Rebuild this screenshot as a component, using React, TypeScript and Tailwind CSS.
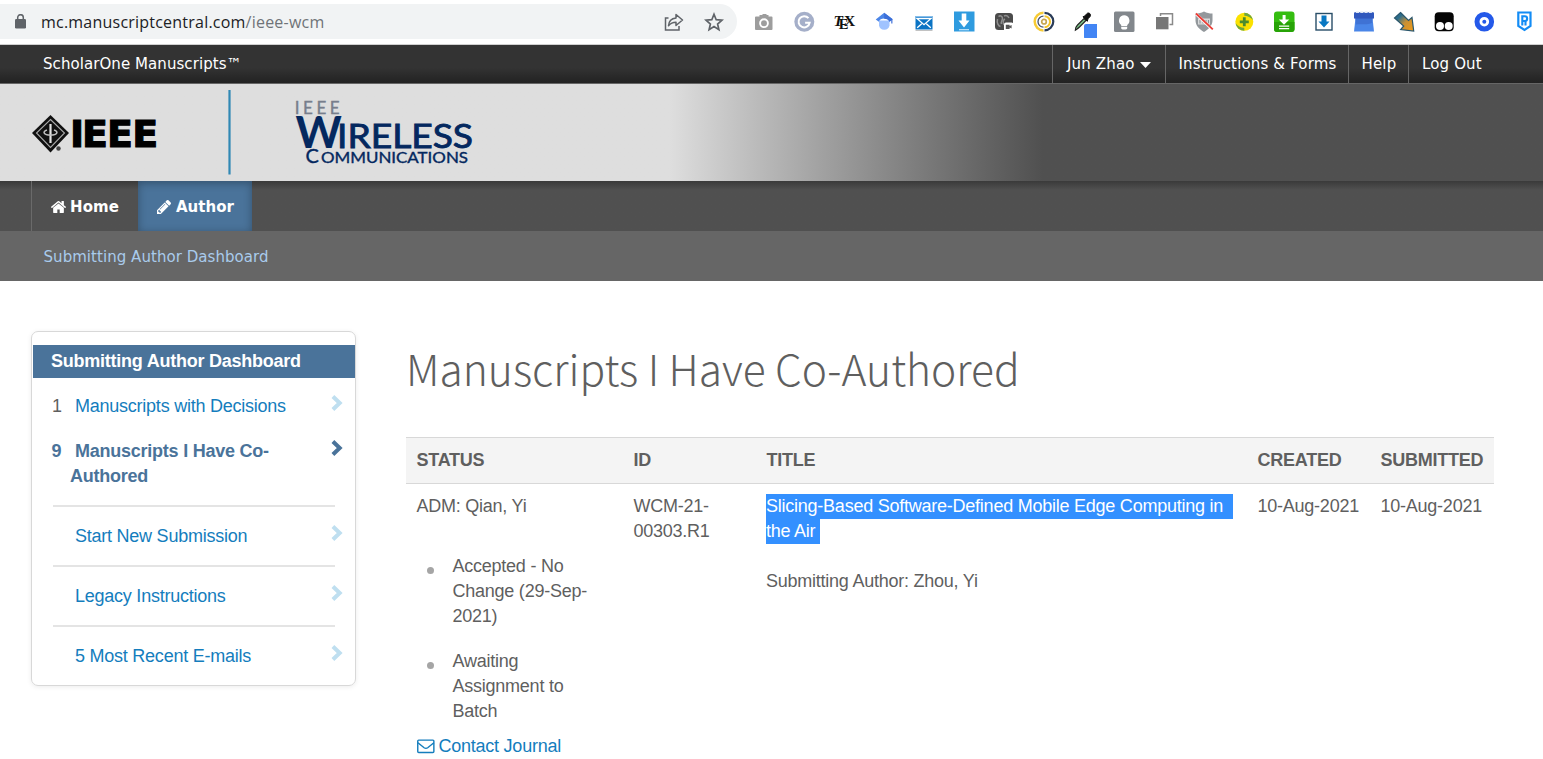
import React from "react";

const cell = "flex w-10 justify-center shrink-0";

function Ico({ children }: { children: React.ReactNode }) {
  return (
    <div className={cell}>
      <svg width="26" height="28" viewBox="-3 -2 26 28" className="block">
        {children}
      </svg>
    </div>
  );
}

function Extensions() {
  return (
    <div className="flex pt-[10px]">
      <Ico>
        <path d="M2 4.500h3.500V3h3v-1h4v1h2v1.500h3a1 1 0 0 1 1 1V17a1 1 0 0 1-1 1H2a1 1 0 0 1-1-1V5.500a1 1 0 0 1 1-1z" fill="#9d9d9d" />
        <circle cx="10" cy="11.200" r="3.900" fill="none" stroke="#fff" strokeWidth="1.900" />
      </Ico>
      <Ico>
        <circle cx="10.300" cy="9.700" r="10" fill="#a5afc9" />
        <path d="M14.500 6.200A5.600 5.600 0 1 0 15.700 10.700H11.100" fill="none" stroke="#fff" strokeWidth="2" />
      </Ico>
      <Ico>
        <text x="0" y="13.500" fontSize="16" fontFamily="Liberation Serif, serif" fontWeight="700" fill="#111">
          <tspan x="-.5" fontStyle="italic" fontSize="15.500">T</tspan>
          <tspan x="4.700" dy="3.500" fontSize="14.500">E</tspan>
          <tspan x="10" dy="-3.500" fontSize="15.500">X</tspan>
        </text>
      </Ico>
      <Ico>
        <path d="M5 8.500v5a5.300 4.800 0 0 0 10.500 0v-5z" fill="#a0c3ff" />
        <path d="M10.200 .8L18.700 7.300 15.500 9.800a5.500 4.500 0 0 0-10.600 0L1.700 7.600z" fill="#4c86e8" />
        <path d="M10.200 .8L18.700 7.300 15.500 9.800a6 4.500 0 0 0-5.300-3z" fill="#3c6fd8" />
        <path d="M17.300 7.500h1.100v4h-1.100z" fill="#3367d6" />
      </Ico>
      <Ico>
        <path d="M1.500 4h17v13.500h-17z" fill="#0b74c4" />
        <path d="M1.500 4h17v1.500h-17z" fill="#86bdea" />
        <path d="M3.200 6.700h13.600L10 12.700zM3.200 15.700l4.500-4M16.800 15.700l-4.500-4" fill="#0b74c4" stroke="#fff" strokeWidth="1.300" />
        <path d="M1.500 18.500h17" stroke="#c2c2c2" />
      </Ico>
      <Ico>
        <path d="M0 -.5h20.500v20H0z" fill="#2f9bdf" />
        <path d="M7.700 1.500h4.600v7h3.200L10 15.500 4.500 8.500h3.200z" fill="#fff" />
        <path d="M5 17.700h10" stroke="#c5e6fa" strokeWidth="1.200" />
      </Ico>
      <Ico>
        <rect x="1" y="1" width="18" height="17" rx="3.500" fill="#4b4b4b" />
        <path d="M4.500 4.500c2-1.500 4 0 4 2s-2 3.500-1 5.500M10 4c2-1 4 0 5 2M3.500 7c-1 4 1 7 3 7.500M11 7c-2 1-2 4-1 6" stroke="#909090" strokeWidth="1.500" fill="none" />
        <rect x="10" y="10.500" width="9.500" height="9" rx="2" fill="#fff" />
        <path d="M11.800 12.700h3.800v1.300l2-1v3.600l-2-1v1.500h-3.800z" fill="#555" />
      </Ico>
      <Ico>
        <path d="M10.500 .8a8.800 8.800 0 0 1 0 17.600" stroke="#2b3c58" strokeWidth="2.200" fill="none" />
        <path d="M9.500 .8a8.800 8.800 0 0 0 0 17.600" stroke="#f7cb35" strokeWidth="2.500" fill="none" />
        <path d="M9.500 4.200a5.500 5.500 0 0 0 0 11" stroke="#44516a" strokeWidth="1.300" fill="none" />
        <path d="M10.500 4.200a5.500 5.500 0 0 1 0 11" stroke="#f5c52a" strokeWidth="2" fill="none" />
        <circle cx="10" cy="9.700" r="2.300" fill="none" stroke="#c7a650" strokeWidth="1.700" />
      </Ico>
      <Ico>
        <path d="M1.300 18.200c0-2 1-4 2.200-5.200l6.500-6.500 2 2L5.500 15c-1 1-2.500 2-4.200 3.200z" fill="#7bbf86" stroke="#222" strokeWidth="1.100" />
        <path d="M9 4.800l1.800-.8 2-2.300c2-2 4.800.6 3.300 2.800L14 6.800l-.7 2.500z" fill="#111" stroke="#111" />
        <rect x="10" y="12" width="15" height="14.800" rx="2" fill="#4285f4" />
      </Ico>
      <Ico>
        <rect x="0" y="-.5" width="20.500" height="20.500" rx="1.500" fill="#82878c" />
        <path d="M10.200 3.300a5.300 5.300 0 0 1 3 9.600v1.300H7.200v-1.300a5.300 5.300 0 0 1 3-9.600zM7.200 15h6v1.500a2 2 0 0 1-2 1h-2a2 2 0 0 1-2-1z" fill="#fff" />
      </Ico>
      <Ico>
        <path d="M6.500 4V1.700h12v10.800h-3" fill="none" stroke="#8a8a8a" strokeWidth="1.500" />
        <path d="M2 5h12.500v12.300H2z" fill="#777" />
      </Ico>
      <Ico>
        <path d="M10-.5c3 1.500 5 2 8.500 2v7c0 5-4 9-8.500 11.500C5.500 17.500 1.500 13.500 1.500 8.500v-7c3.500 0 5.500-.5 8.500-2z" fill="#93989c" />
        <path d="M4 6.500h12v6H4z" fill="#d8dadb" />
        <path d="M6 8v3.500M9 8v3.500M12 8v3.500M14.500 8v3.500" stroke="#8b8f92" />
        <path d="M2 2l16.500 15.500" stroke="#fff" strokeWidth="3" />
        <path d="M2 1.500l16.800 15.800" stroke="#ea3b34" strokeWidth="1.800" />
      </Ico>
      <Ico>
        <circle cx="10.300" cy="9.800" r="9" fill="#fbe100" />
        <path d="M10.300 .8a9 9 0 0 1 8.800 7.500c-2.500-3-5.500-4.500-8.800-4.500zM10.300 18.800a9 9 0 0 1-8.800-7.500c2.500 3 5.500 4.500 8.800 4.500z" fill="#6da740" />
        <path d="M10.300 5.300v9M5.800 9.800h9" stroke="#4b8b2e" strokeWidth="2.800" />
      </Ico>
      <Ico>
        <rect x="0" y="-.5" width="20.500" height="20.500" rx="3" fill="#35bd10" />
        <path d="M0 10h20.500v7a3 3 0 0 1-3 3H3a3 3 0 0 1-3-3z" fill="#27a307" />
        <path d="M8.600 3h3v4.500h3.700L10 12.700 4.800 7.500h3.800zM5 13.500h10.200v1.300H5zM5 16h10.200v1.300H5z" fill="#fff" />
      </Ico>
      <Ico>
        <rect x="2" y="1.500" width="16" height="16.500" fill="#fff" stroke="#294e68" strokeWidth="1.400" />
        <path d="M7.500 3.500h5v6h3L10 15.500 4.500 9.500h3z" fill="#0877c2" />
      </Ico>
      <Ico>
        <path d="M1.500 6h17l1.500 13.500H0z" fill="#4a86e8" />
        <path d="M1.500 7h17l-.5 4c-4 2-12 1-16 1.500z" fill="#3f72d4" />
        <rect x="0" y=".3" width="20" height="6.500" rx="1" fill="#3058bd" />
        <path d="M2 .300h16" stroke="#dde5f2" strokeWidth="1.500" strokeDasharray="3 1.300" />
      </Ico>
      <Ico>
        <defs>
          <linearGradient id="arrow" x1="0" y1="0" x2="1" y2="1">
            <stop offset=".25" stopColor="#2c6d8c" />
            <stop offset=".55" stopColor="#c79035" />
            <stop offset="1" stopColor="#f29a16" />
          </linearGradient>
        </defs>
        <path d="M6.500 .5l8 8 3.500-3 1.700 13.500-13-1.500 3-3.500L.5 6z" fill="url(#arrow)" stroke="#28556c" strokeWidth="1.200" />
      </Ico>
      <Ico>
        <rect x=".7" y=".3" width="19" height="19" rx="4" fill="#050505" />
        <circle cx="6" cy="14" r="4" fill="#fff" />
        <circle cx="14.700" cy="14" r="4" fill="#fff" />
      </Ico>
      <Ico>
        <circle cx="10.300" cy="9.700" r="7.300" fill="#fff" stroke="#2459e9" strokeWidth="5" />
        <circle cx="10.300" cy="9.700" r="2" fill="#2459e9" />
      </Ico>
      <Ico>
        <path d="M4.300 .5h12.200v13.500l-6 4-6.200-4z" fill="#fff" stroke="#138cf5" strokeWidth="2.200" />
        <path d="M8.300 13.500V4.300h2.500a2.300 2.300 0 0 1 0 4.700h-2M11.500 9v4.500" fill="none" stroke="#138cf5" strokeWidth="2.100" />
      </Ico>
    </div>
  );
}

function Toolbar() {
  return (
    <div className="flex h-[45px] border-b border-[#d0d0d0] bg-white">
      <div className="mt-1 -ml-4 flex h-[35px] w-[753px] shrink-0 items-center rounded-full bg-[#f1f3f4] pl-[31px]">
        <svg width="12" height="16" viewBox="0 0 12 16" className="mt-px shrink-0">
          <rect x="0" y="5" width="11" height="9.500" rx="1.300" fill="#5f6368" />
          <path d="M2.700 6V3.500a2.800 2.800 0 0 1 5.600 0V6" fill="none" stroke="#5f6368" strokeWidth="1.500" />
        </svg>
        <div className="mt-px ml-[14px] w-[624px] whitespace-nowrap font-['Open_Sans',sans-serif] text-[16px] tracking-[0.22px] text-[#202124]">
          mc.manuscriptcentral.com<span className="text-[#6f7378]">/ieee-wcm</span>
        </div>
        <svg width="20" height="20" viewBox="0 0 20 20" className="-ml-px shrink-0" fill="none" stroke="#5f6368" strokeWidth="1.500">
          <path d="M4.500 6H1.500v12H15v-4" />
          <path d="M12 2.500l6.500 5.500-6.500 5.500v-3.300c-3.500 0-5.500 1-7.500 3.500.3-4 2.800-7.200 7.500-7.700z" strokeLinejoin="round" />
        </svg>
        <svg width="20" height="20" viewBox="0 0 20 20" className="ml-5 shrink-0" fill="none" stroke="#5f6368" strokeWidth="1.700">
          <path d="M10 2.300l2.200 5.400 5.800.5-4.400 3.800 1.300 5.600-4.900-3-4.900 3 1.300-5.600L2 8.200l5.800-.5z" />
        </svg>
      </div>
      <div className="ml-[7px]">
        <Extensions />
      </div>
    </div>
  );
}

function TopBar() {
  const item = "flex h-[38px] items-center border-l border-[#666] whitespace-nowrap";
  return (
    <div className="flex h-[39px] justify-between border-b border-[#666] bg-linear-to-b from-[#333] from-60% to-[#222] font-['DejaVu_Sans',sans-serif] text-[15px] text-white">
      <div className="pt-[7px] pl-[43px] tracking-[0.07px]">ScholarOne Manuscripts™</div>
      <div className="flex tracking-[0.15px]">
        <div className={item + " w-[113px] pl-[14px]"}>
          Jun Zhao
          <svg width="11" height="6" viewBox="0 0 11 6" className="mt-[2px] ml-[5px]">
            <path d="M0 0h11L5.500 6z" fill="#fff" />
          </svg>
        </div>
        <div className={item + " w-[183px] pl-[12.500px]"}>Instructions &amp; Forms</div>
        <div className={item + " w-[60px] pl-[12.500px]"}>Help</div>
        <div className={item + " w-[135px] pl-[13px]"}>Log Out</div>
      </div>
    </div>
  );
}

function Banner() {
  return (
    <div className="flex h-[97px] bg-linear-to-r from-[#dedede] from-[670px] to-[#505050] to-[1043px]">
      <svg width="500" height="97" viewBox="0 84 500 97">
        <path d="M50.500 115L69 133 50.500 152.500 32 133z" fill="#111" />
        <path d="M50.500 119.500L64.500 133 50.500 147.500 36.500 133z" fill="none" stroke="#aaa" strokeWidth="1.100" />
        <path d="M50.500 124v19" stroke="#e4e4e4" strokeWidth="2.200" fill="none" />
        <path d="M47 130c-5 1.500-3.500 5 3.500 5s8.500-3.500 3.500-5" stroke="#c0c0c0" strokeWidth="1.500" fill="none" />
        <circle cx="58.500" cy="148.500" r="2.200" fill="#444" />
        <text x="70 82 107 132.300" y="147" fontFamily="DejaVu Sans, sans-serif" fontWeight="700" fontSize="38" fill="#000" stroke="#000" strokeWidth="1.100">IEEE</text>
        <path d="M229.500 90v84.500" stroke="#3088b4" strokeWidth="2.200" />
        <text x="294.700" y="114" fontFamily="Lato, sans-serif" fontSize="17" textLength="45" fill="#777e8c" stroke="#777e8c" strokeWidth=".4">IEEE</text>
        <g fontFamily="Lato, sans-serif" fill="#04285f" stroke="#04285f">
          <text y="148" fontSize="33.500" strokeWidth=".9">
            <tspan x="295.500" fontSize="44" fontWeight="700" strokeWidth=".1">W</tspan>
            <tspan x="337" textLength="136" lengthAdjust="spacingAndGlyphs">IRELESS</tspan>
          </text>
          <text y="163" fontSize="14.500" strokeWidth=".35">
            <tspan x="305.500" fontSize="20">C</tspan>
            <tspan x="321" textLength="147" lengthAdjust="spacingAndGlyphs">OMMUNICATIONS</tspan>
          </text>
        </g>
      </svg>
    </div>
  );
}

function Nav() {
  return (
    <div className="font-['DejaVu_Sans',sans-serif] text-[15px]">
      <div className="flex h-[50px] bg-[#505050] bg-linear-to-b from-[#3a3a3a] to-[#505050] to-[9px] pl-[31px] font-bold text-white">
        <div className="flex w-[107px] items-center border-l border-[#6a6a6a] pt-[2px] pl-[19px] tracking-[0.1px]">
          <svg width="15" height="12" viewBox="25 256 1613 1280" className="mr-1" fill="#fff">
            <path d="M1408 992v480q0 26-19 45t-45 19h-384v-384h-256v384h-384q-26 0-45-19t-19-45v-480q0-1 .5-3t.5-3l575-474 575 474q1 2 1 6zm223-69l-62 74q-8 9-21 11h-3q-13 0-21-7l-692-577-692 577q-12 8-24 7-13-2-21-11l-62-74q-8-10-7-23.500t11-21.500l719-599q32-26 76-26t76 26l244 204v-195q0-14 9-23t23-9h192q14 0 23 9t9 23v408l219 182q10 8 11 21.500t-7 23.500z" />
          </svg>
          Home
        </div>
        <div className="flex w-[114px] items-center bg-[#4a739a] pt-[2px] pl-[19px] shadow-[inset_0_2px_9px_rgba(0,0,0,0.3)]">
          <svg width="14" height="14" viewBox="0 149 1515 1515" className="mr-[5px]" fill="#fff">
            <path d="M363 1536l91-91l-235-235l-91 91v107h128v128h107zM886 608q0-22-22-22q-10 0-17 7l-542 542q-7 7-7 17q0 22 22 22q10 0 17-7l542-542q7-7 7-17zM832 416l416 416l-832 832h-416v-416zM1515 512q0 53-37 90l-166 166l-416-416l166-165q36-38 90-38q53 0 91 38l235 234q37 39 37 91z" />
          </svg>
          Author
        </div>
      </div>
      <div className="flex h-[50px] items-center bg-[#666] pt-[2px] pl-[43.500px] tracking-[0.05px] text-[#a9cbec]">Submitting Author Dashboard</div>
    </div>
  );
}

function Chevron({ color }: { color: string }) {
  return (
    <svg width="12" height="16" viewBox="0 0 12 16" className="mt-px mr-[12px] ml-auto shrink-0">
      <path d="M1.900 1.500L8.700 8l-6.800 6.500" fill="none" stroke={color} strokeWidth="4" />
    </svg>
  );
}

function SideLink({ label }: { label: string }) {
  return (
    <>
      <div className="mr-5 ml-[21px] h-[2px] bg-[#e4e4e4]" />
      <div className="flex h-[58px] pt-[17px]">
        <span className="pl-[43px] text-[#147dbd]">{label}</span>
        <Chevron color="#bfdff0" />
      </div>
    </>
  );
}

function Sidebar() {
  return (
    <div className="mt-[50px] ml-[31px] h-[355px] w-[325px] shrink-0 rounded-[7px] border border-[#d8d8d8] pt-[13px] shadow-[0_1px_5px_rgba(0,0,0,0.08)]">
      <div className="ml-px flex h-[33px] items-center bg-[#4a739a] pl-[18px] font-bold text-white">Submitting Author Dashboard</div>
      <div className="flex h-[45px] pt-4">
        <span className="w-[43px] pl-5">1</span>
        <span className="text-[#147dbd]">Manuscripts with Decisions</span>
        <Chevron color="#bfdff0" />
      </div>
      <div className="flex h-[82px] pt-4 font-bold text-[#4a739a]">
        <span className="w-[38px] pl-[19.500px]">9</span>
        <span className="w-[215px] indent-[5px]">Manuscripts I Have Co-<br /><span className="inline-block indent-0">Authored</span></span>
        <Chevron color="#4a739a" />
      </div>
      <SideLink label="Start New Submission" />
      <SideLink label="Legacy Instructions" />
      <SideLink label="5 Most Recent E-mails" />
    </div>
  );
}

const cols = "grid grid-cols-[217px_133px_491px_123px_124px]";

function Bullet({ children }: { children: React.ReactNode }) {
  return (
    <li className="mb-5 flex">
      <span className="mt-[13px] mr-[19px] ml-[10px] size-[7px] shrink-0 rounded-full bg-[#a5a5a5]" />
      <span>{children}</span>
    </li>
  );
}

function Content() {
  return (
    <div className="ml-[50px] w-[1088px]">
      <h1 className="mt-[55px] h-[65px] whitespace-nowrap font-['Noto_Sans_CJK_SC',sans-serif] text-[42.500px] leading-[64px] font-light tracking-normal">
        Manuscripts I Have Co-Authored
      </h1>
      <div className={cols + " mt-9 h-[47px] items-center border-y border-[#d8d8d8] bg-[#f4f4f4] font-bold *:pl-[10.500px]"}>
        <div>STATUS</div>
        <div>ID</div>
        <div>TITLE</div>
        <div>CREATED</div>
        <div>SUBMITTED</div>
      </div>
      <div className={cols + " pt-[10px]"}>
        <div className="pl-[10.500px]">
          <div>ADM: Qian, Yi</div>
          <ul className="mt-[35px]">
            <Bullet>Accepted - No<br />Change (29-Sep-<br />2021)</Bullet>
            <Bullet>Awaiting<br />Assignment to<br />Batch</Bullet>
          </ul>
          <div className="-mt-[10px] flex items-center text-[#147dbd]">
            <svg width="18" height="15" viewBox="0 0 19 15" className="mr-1" fill="none" stroke="#147dbd" strokeWidth="1.500">
              <rect x=".8" y=".8" width="17" height="13" rx="1" />
              <path d="M1 3.500l6.500 5.300c1.400 1 2.400 1 3.800 0L17.800 3.500" />
            </svg>
            Contact Journal
          </div>
        </div>
        <div className="pl-[10.500px]">WCM-21-<br />00303.R1</div>
        <div className="pl-[10px]">
          <div className="flex flex-col items-start text-white *:h-[25px] *:bg-[#3390ff]">
            <span className="w-[467px]">Slicing-Based Software-Defined Mobile Edge Computing in</span>
            <span className="w-[54px]">the Air</span>
          </div>
          <div className="mt-[25px]">Submitting Author: Zhou, Yi</div>
        </div>
        <div className="pl-[10.500px]">10-Aug-2021</div>
        <div className="pl-[10.500px]">10-Aug-2021</div>
      </div>
    </div>
  );
}

export default function App() {
  return (
    <div className="h-[759px] w-[1543px] overflow-hidden bg-white font-['Liberation_Sans',Arial,sans-serif] text-[18px] leading-[25px] text-[#5f5f5f]">
      <Toolbar />
      <TopBar />
      <Banner />
      <Nav />
      <div className="flex tracking-[-0.24px] whitespace-nowrap">
        <Sidebar />
        <Content />
      </div>
    </div>
  );
}
